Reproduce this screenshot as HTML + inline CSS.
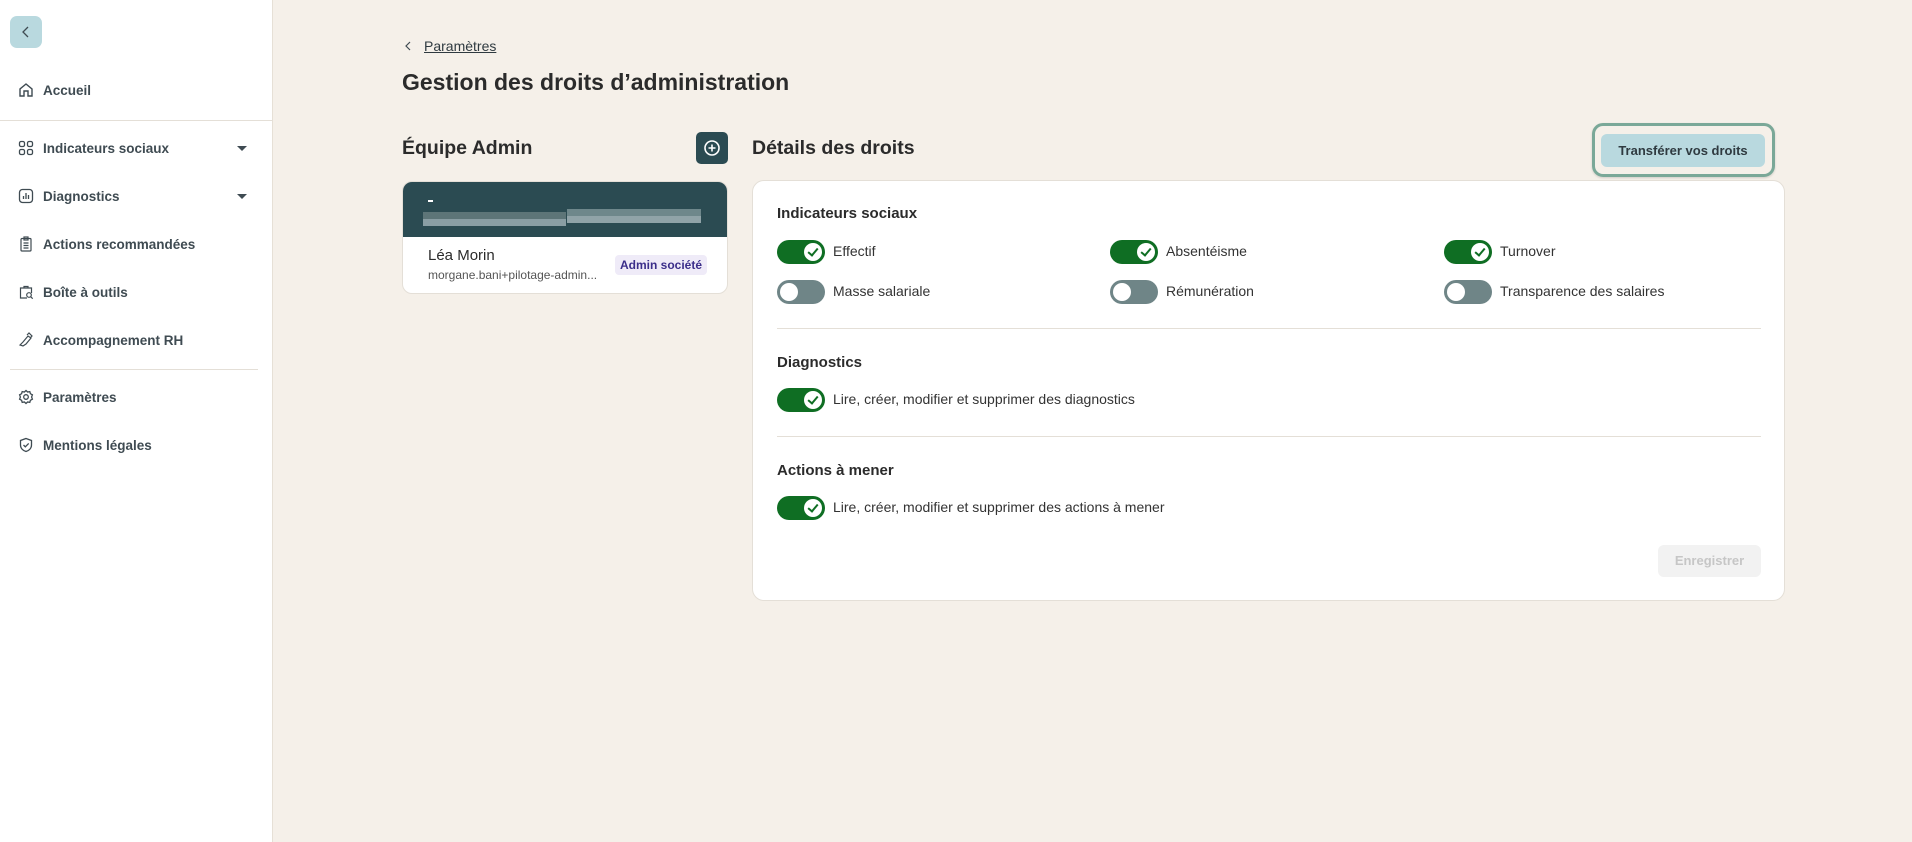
<!DOCTYPE html>
<html><head><meta charset="utf-8"><style>
*{box-sizing:border-box;margin:0;padding:0}
body{width:1912px;height:842px;overflow:hidden;background:#f5f0e9;font-family:"Liberation Sans",sans-serif;color:#2b2b2b;position:relative}
.side{position:absolute;left:0;top:0;width:273px;height:842px;background:#fff;border-right:1px solid #e6e0d6}
.back{position:absolute;left:10px;top:16px;width:32px;height:32px;border-radius:7px;background:#b9d9df}
.nav{position:absolute;left:18px;font-size:13.5px;font-weight:bold;color:#3f4b52;display:flex;align-items:center;gap:9px;height:20px;margin-top:-10px}
.nav svg{width:16px;height:16px}
.caret{position:absolute;left:237px;width:0;height:0;border-left:5px solid transparent;border-right:5px solid transparent;border-top:5px solid #3f4b52}
.sep{position:absolute;height:1px;background:#e4dfd7}
.abs{position:absolute}
h1{position:absolute;left:402px;top:69px;font-size:23px;font-weight:bold;color:#2b2b2b}
h2{position:absolute;font-size:19.5px;font-weight:bold;color:#2b2b2b}
.tg{position:absolute;width:48px;height:24px;border-radius:12px}
.on{background:#0f6e23}.off{background:#6f8587}
.tg i{position:absolute;top:3px;width:18px;height:18px;border-radius:50%;background:#fff}
.on i{left:27px}.off i{left:3px}
.on i:after{content:"";position:absolute;left:6px;top:3px;width:4px;height:8px;border:solid #0f6e23;border-width:0 2px 2px 0;transform:rotate(40deg)}
.lb{position:absolute;font-size:14px;color:#333;line-height:16px;margin-top:-8px}
.sh{position:absolute;left:777px;font-size:15px;font-weight:bold;color:#2b2b2b}
.px{position:absolute;height:7px}
</style></head><body>
<div class="side">
 <div class="back"><svg width="32" height="32" viewBox="0 0 32 32"><path d="M18 11l-5 5 5 5" fill="none" stroke="#3f4b52" stroke-width="1.3"/></svg></div>
 <div class="nav" style="top:90px"><svg viewBox="0 0 16 16"><path d="M2 14V7l6-5 6 5v7h-4V9H6v5z" fill="none" stroke="#3f4b52" stroke-width="1.4"/></svg>Accueil</div>
 <div class="sep" style="left:0;width:273px;top:120px"></div>
 <div class="nav" style="top:148px"><svg viewBox="0 0 16 16" fill="none" stroke="#3f4b52" stroke-width="1.3"><rect x="1.5" y="1.5" width="5" height="5" rx="1.5"/><rect x="9.5" y="1.5" width="5" height="5" rx="1.5"/><rect x="1.5" y="9.5" width="5" height="5" rx="1.5"/><rect x="9.5" y="9.5" width="5" height="5" rx="1.5"/></svg>Indicateurs sociaux</div>
 <div class="caret" style="top:146px"></div>
 <div class="nav" style="top:196px"><svg viewBox="0 0 16 16" fill="none" stroke="#3f4b52" stroke-width="1.3"><rect x="1.5" y="1.5" width="13" height="13" rx="3"/><path d="M5.5 11V8M8 11V5M10.5 11V7"/></svg>Diagnostics</div>
 <div class="caret" style="top:194px"></div>
 <div class="nav" style="top:244px"><svg viewBox="0 0 16 16" fill="none" stroke="#3f4b52" stroke-width="1.2"><rect x="3" y="2.5" width="10" height="12.5" rx="1"/><rect x="6" y="1" width="4" height="3"/><path d="M5.5 7h5M5.5 9.5h5M5.5 12h5"/></svg>Actions recommandées</div>
 <div class="nav" style="top:292px"><svg viewBox="0 0 16 16" fill="none" stroke="#3f4b52" stroke-width="1.2"><path d="M6 4V2.5h4V4M9 14H2.5V4h11v5"/><circle cx="11" cy="11" r="2.3"/><path d="M12.7 12.7l2 2"/></svg>Boîte à outils</div>
 <div class="nav" style="top:340px"><svg viewBox="0 0 16 16" fill="none" stroke="#3f4b52" stroke-width="1.2"><path d="M2 13l3-3 5-6 3 2-5 6-3 2zM9 3l2-2 3 3-2 2"/></svg>Accompagnement RH</div>
 <div class="sep" style="left:10px;width:248px;top:369px"></div>
 <div class="nav" style="top:397px"><svg viewBox="0 0 16 16" fill="none" stroke="#3f4b52" stroke-width="1.3"><circle cx="8" cy="8" r="2.3"/><path d="M8 1.5l1.6 1.5 2.2-.4.6 2.1 2 1.1-.8 2.2.8 2.2-2 1.1-.6 2.1-2.2-.4L8 14.5 6.4 13l-2.2.4-.6-2.1-2-1.1.8-2.2-.8-2.2 2-1.1.6-2.1 2.2.4z"/></svg>Paramètres</div>
 <div class="nav" style="top:445px"><svg viewBox="0 0 16 16" fill="none" stroke="#3f4b52" stroke-width="1.3"><path d="M8 1.5l5.5 2v4.5c0 3.3-2.5 5.6-5.5 6.5C5 13.6 2.5 11.3 2.5 8V3.5z"/><path d="M5.5 8l1.8 1.8L10.7 6.4"/></svg>Mentions légales</div>
</div>

<svg class="abs" style="left:403px;top:40px" width="10" height="12" viewBox="0 0 10 12"><path d="M7 2L3 6l4 4" fill="none" stroke="#3f4b52" stroke-width="1.2"/></svg>
<div class="abs" style="left:424px;top:38px;font-size:14px;color:#2f3a40;text-decoration:underline">Paramètres</div>
<h1>Gestion des droits d’administration</h1>

<h2 style="left:402px;top:137px">Équipe Admin</h2>
<div class="abs" style="left:696px;top:132px;width:32px;height:32px;border-radius:5px;background:#2b4b52"><svg width="32" height="32" viewBox="0 0 32 32" fill="none" stroke="#fff" stroke-width="1.6"><circle cx="16" cy="16" r="7"/><path d="M16 12.5v7M12.5 16h7"/></svg></div>

<div class="abs" style="left:402px;top:181px;width:326px;height:113px;border-radius:10px;background:#fff;border:1px solid #e4dfd7;overflow:hidden">
 <div style="height:55px;background:#2b4b52;position:relative">
  <div class="abs" style="left:25px;top:18px;width:5px;height:1.5px;background:#fff"></div>
  <div class="px" style="left:20px;top:30px;width:143px;background:#5d7578"></div>
  <div class="px" style="left:20px;top:37px;width:143px;background:#8a9ea4"></div>
  <div class="px" style="left:164px;top:27px;width:134px;background:#6e878b"></div>
  <div class="px" style="left:164px;top:34px;width:134px;background:#90a3a8"></div>
 </div>
 <div class="abs" style="left:25px;top:65px;font-size:15px;color:#2b2b2b">Léa Morin</div>
 <div class="abs" style="left:25px;top:86px;font-size:12px;color:#555">morgane.bani+pilotage-admin...</div>
 <div class="abs" style="left:212px;top:73px;height:20px;padding:0 5px;border-radius:4px;background:#efebf8;color:#3b2e8a;font-size:12px;font-weight:bold;line-height:20px">Admin société</div>
</div>

<h2 style="left:752px;top:137px">Détails des droits</h2>
<div class="abs" style="left:1592px;top:123px;width:183px;height:54px;border:3px solid #7aa898;border-radius:11px;box-shadow:0 1px 2px rgba(0,0,0,.15)"></div>
<div class="abs" style="left:1601px;top:134px;width:164px;height:33px;border-radius:6px;background:#b9d9df;font-size:13px;font-weight:bold;color:#2f3a40;text-align:center;line-height:33px">Transférer vos droits</div>

<div class="abs" style="left:752px;top:180px;width:1033px;height:421px;background:#fff;border:1px solid #e4dfd7;border-radius:12px"></div>
<div class="sh" style="top:205px">Indicateurs sociaux</div>
<div class="tg on" style="left:777px;top:240px"><i></i></div><div class="lb" style="left:833px;top:251px">Effectif</div>
<div class="tg on" style="left:1110px;top:240px"><i></i></div><div class="lb" style="left:1166px;top:251px">Absentéisme</div>
<div class="tg on" style="left:1444px;top:240px"><i></i></div><div class="lb" style="left:1500px;top:251px">Turnover</div>
<div class="tg off" style="left:777px;top:280px"><i></i></div><div class="lb" style="left:833px;top:291px">Masse salariale</div>
<div class="tg off" style="left:1110px;top:280px"><i></i></div><div class="lb" style="left:1166px;top:291px">Rémunération</div>
<div class="tg off" style="left:1444px;top:280px"><i></i></div><div class="lb" style="left:1500px;top:291px">Transparence des salaires</div>
<div class="sep" style="left:777px;width:984px;top:328px"></div>
<div class="sh" style="top:354px">Diagnostics</div>
<div class="tg on" style="left:777px;top:388px"><i></i></div><div class="lb" style="left:833px;top:399px">Lire, créer, modifier et supprimer des diagnostics</div>
<div class="sep" style="left:777px;width:984px;top:436px"></div>
<div class="sh" style="top:462px">Actions à mener</div>
<div class="tg on" style="left:777px;top:496px"><i></i></div><div class="lb" style="left:833px;top:507px">Lire, créer, modifier et supprimer des actions à mener</div>
<div class="abs" style="left:1658px;top:545px;width:103px;height:32px;border-radius:6px;background:#f2f2f2;color:#c6c6c6;font-size:13px;font-weight:bold;text-align:center;line-height:32px">Enregistrer</div>
</body></html>
